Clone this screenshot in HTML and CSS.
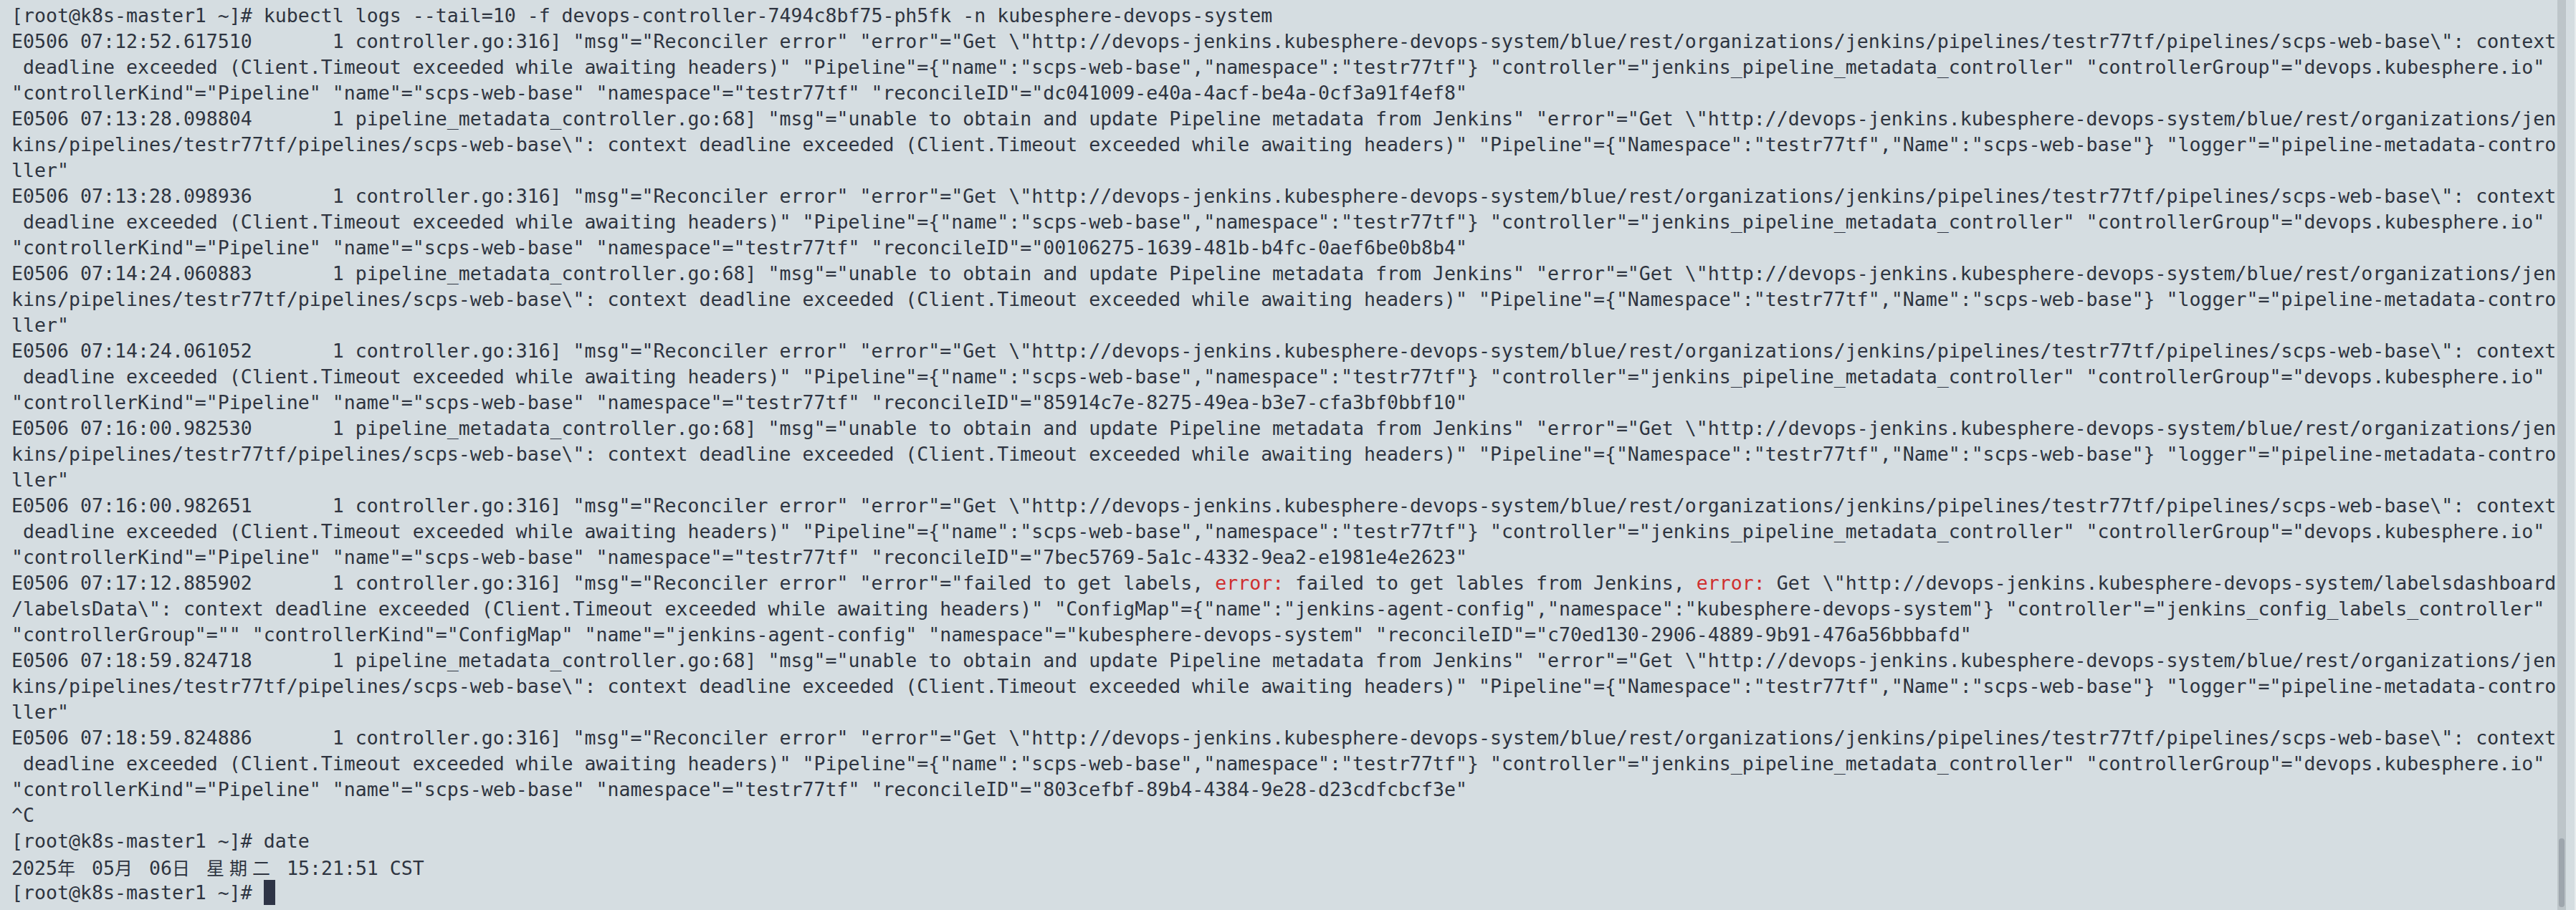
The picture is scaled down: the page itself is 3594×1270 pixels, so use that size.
FILE: index.html
```html
<!DOCTYPE html>
<html lang="zh-CN">
<head>
    <meta charset="UTF-8">
    <title>root@k8s-master1</title>
    <link rel="stylesheet" href="styles.css">
</head>

<body>

<div class="screen">

    <div class="term">
        <div class="row">[root@k8s-master1 ~]# kubectl logs --tail=10 -f devops-controller-7494c8bf75-ph5fk -n kubesphere-devops-system</div>

        <div class="row">E0506 07:12:52.617510       1 controller.go:316] "msg"="Reconciler error" "error"="Get \"http://devops-jenkins.kubesphere-devops-system/blue/rest/organizations/jenkins/pipelines/testr77tf/pipelines/scps-web-base\": context</div>
        <div class="row"> deadline exceeded (Client.Timeout exceeded while awaiting headers)" "Pipeline"={"name":"scps-web-base","namespace":"testr77tf"} "controller"="jenkins_pipeline_metadata_controller" "controllerGroup"="devops.kubesphere.io"</div>
        <div class="row">"controllerKind"="Pipeline" "name"="scps-web-base" "namespace"="testr77tf" "reconcileID"="dc041009-e40a-4acf-be4a-0cf3a91f4ef8"</div>

        <div class="row">E0506 07:13:28.098804       1 pipeline_metadata_controller.go:68] "msg"="unable to obtain and update Pipeline metadata from Jenkins" "error"="Get \"http://devops-jenkins.kubesphere-devops-system/blue/rest/organizations/jen</div>
        <div class="row">kins/pipelines/testr77tf/pipelines/scps-web-base\": context deadline exceeded (Client.Timeout exceeded while awaiting headers)" "Pipeline"={"Namespace":"testr77tf","Name":"scps-web-base"} "logger"="pipeline-metadata-contro</div>
        <div class="row">ller"</div>

        <div class="row">E0506 07:13:28.098936       1 controller.go:316] "msg"="Reconciler error" "error"="Get \"http://devops-jenkins.kubesphere-devops-system/blue/rest/organizations/jenkins/pipelines/testr77tf/pipelines/scps-web-base\": context</div>
        <div class="row"> deadline exceeded (Client.Timeout exceeded while awaiting headers)" "Pipeline"={"name":"scps-web-base","namespace":"testr77tf"} "controller"="jenkins_pipeline_metadata_controller" "controllerGroup"="devops.kubesphere.io"</div>
        <div class="row">"controllerKind"="Pipeline" "name"="scps-web-base" "namespace"="testr77tf" "reconcileID"="00106275-1639-481b-b4fc-0aef6be0b8b4"</div>

        <div class="row">E0506 07:14:24.060883       1 pipeline_metadata_controller.go:68] "msg"="unable to obtain and update Pipeline metadata from Jenkins" "error"="Get \"http://devops-jenkins.kubesphere-devops-system/blue/rest/organizations/jen</div>
        <div class="row">kins/pipelines/testr77tf/pipelines/scps-web-base\": context deadline exceeded (Client.Timeout exceeded while awaiting headers)" "Pipeline"={"Namespace":"testr77tf","Name":"scps-web-base"} "logger"="pipeline-metadata-contro</div>
        <div class="row">ller"</div>

        <div class="row">E0506 07:14:24.061052       1 controller.go:316] "msg"="Reconciler error" "error"="Get \"http://devops-jenkins.kubesphere-devops-system/blue/rest/organizations/jenkins/pipelines/testr77tf/pipelines/scps-web-base\": context</div>
        <div class="row"> deadline exceeded (Client.Timeout exceeded while awaiting headers)" "Pipeline"={"name":"scps-web-base","namespace":"testr77tf"} "controller"="jenkins_pipeline_metadata_controller" "controllerGroup"="devops.kubesphere.io"</div>
        <div class="row">"controllerKind"="Pipeline" "name"="scps-web-base" "namespace"="testr77tf" "reconcileID"="85914c7e-8275-49ea-b3e7-cfa3bf0bbf10"</div>

        <div class="row">E0506 07:16:00.982530       1 pipeline_metadata_controller.go:68] "msg"="unable to obtain and update Pipeline metadata from Jenkins" "error"="Get \"http://devops-jenkins.kubesphere-devops-system/blue/rest/organizations/jen</div>
        <div class="row">kins/pipelines/testr77tf/pipelines/scps-web-base\": context deadline exceeded (Client.Timeout exceeded while awaiting headers)" "Pipeline"={"Namespace":"testr77tf","Name":"scps-web-base"} "logger"="pipeline-metadata-contro</div>
        <div class="row">ller"</div>

        <div class="row">E0506 07:16:00.982651       1 controller.go:316] "msg"="Reconciler error" "error"="Get \"http://devops-jenkins.kubesphere-devops-system/blue/rest/organizations/jenkins/pipelines/testr77tf/pipelines/scps-web-base\": context</div>
        <div class="row"> deadline exceeded (Client.Timeout exceeded while awaiting headers)" "Pipeline"={"name":"scps-web-base","namespace":"testr77tf"} "controller"="jenkins_pipeline_metadata_controller" "controllerGroup"="devops.kubesphere.io"</div>
        <div class="row">"controllerKind"="Pipeline" "name"="scps-web-base" "namespace"="testr77tf" "reconcileID"="7bec5769-5a1c-4332-9ea2-e1981e4e2623"</div>

        <div class="row">E0506 07:17:12.885902       1 controller.go:316] "msg"="Reconciler error" "error"="failed to get labels, <span class="err">error:</span> failed to get lables from Jenkins, <span class="err">error:</span> Get \"http://devops-jenkins.kubesphere-devops-system/labelsdashboard</div>
        <div class="row">/labelsData\": context deadline exceeded (Client.Timeout exceeded while awaiting headers)" "ConfigMap"={"name":"jenkins-agent-config","namespace":"kubesphere-devops-system"} "controller"="jenkins_config_labels_controller"</div>
        <div class="row">"controllerGroup"="" "controllerKind"="ConfigMap" "name"="jenkins-agent-config" "namespace"="kubesphere-devops-system" "reconcileID"="c70ed130-2906-4889-9b91-476a56bbbafd"</div>

        <div class="row">E0506 07:18:59.824718       1 pipeline_metadata_controller.go:68] "msg"="unable to obtain and update Pipeline metadata from Jenkins" "error"="Get \"http://devops-jenkins.kubesphere-devops-system/blue/rest/organizations/jen</div>
        <div class="row">kins/pipelines/testr77tf/pipelines/scps-web-base\": context deadline exceeded (Client.Timeout exceeded while awaiting headers)" "Pipeline"={"Namespace":"testr77tf","Name":"scps-web-base"} "logger"="pipeline-metadata-contro</div>
        <div class="row">ller"</div>

        <div class="row">E0506 07:18:59.824886       1 controller.go:316] "msg"="Reconciler error" "error"="Get \"http://devops-jenkins.kubesphere-devops-system/blue/rest/organizations/jenkins/pipelines/testr77tf/pipelines/scps-web-base\": context</div>
        <div class="row"> deadline exceeded (Client.Timeout exceeded while awaiting headers)" "Pipeline"={"name":"scps-web-base","namespace":"testr77tf"} "controller"="jenkins_pipeline_metadata_controller" "controllerGroup"="devops.kubesphere.io"</div>
        <div class="row">"controllerKind"="Pipeline" "name"="scps-web-base" "namespace"="testr77tf" "reconcileID"="803cefbf-89b4-4384-9e28-d23cdfcbcf3e"</div>

        <div class="row">^C</div>
        <div class="row">[root@k8s-master1 ~]# date</div>
        <div class="row">2025<span class="wide">年</span> 05<span class="wide">月</span> 06<span class="wide">日</span> <span class="wide">星</span><span class="wide">期</span><span class="wide">二</span> 15:21:51 CST</div>
        <div class="row">[root@k8s-master1 ~]# <span class="cursor"></span></div>
    </div>

    <div class="scrollTrack">
        <div class="scrollThumb"></div>
    </div>

    <div class="edge"></div>

</div>

</body>
</html>
```

FILE: styles.css
```css
body {
    margin: 0;
    background-color: #d5dde1;
    overflow: hidden;
}

.screen {
    height: 1270px;
    display: flex;
}

/* one row = one terminal line, 222 cells of 16px */
.term {
    width: 3552px;
    margin-left: 16px;
    padding-top: 4px;
    font-family: "DejaVu Sans Mono", monospace;
    font-size: 26.576px;
    line-height: 36px;
    color: #2e3440;
}

.row {
    height: 36px;
    white-space: pre;
    overflow: hidden;
}

.err {
    color: #cf2f2f;
}

/* double width cells for the CJK date */
.wide {
    display: inline-block;
    width: 32px;
    font-family: "Noto Sans CJK SC", sans-serif;
    font-size: 25px;
}

.cursor {
    display: inline-block;
    width: 16px;
    height: 35px;
    vertical-align: top;
    background-color: #2e3446;
}

.scrollTrack {
    width: 12px;
    padding-bottom: 4px;
    box-sizing: border-box;
    background-color: #bdc5c9;
    display: flex;
    flex-direction: column;
    justify-content: flex-end;
    align-items: center;
}

.scrollThumb {
    width: 8px;
    height: 96px;
    border-radius: 4px;
    background-color: #9ea6ad;
}

.edge {
    width: 2px;
    margin-left: 12px;
    background-color: #e8ecee;
}
```
